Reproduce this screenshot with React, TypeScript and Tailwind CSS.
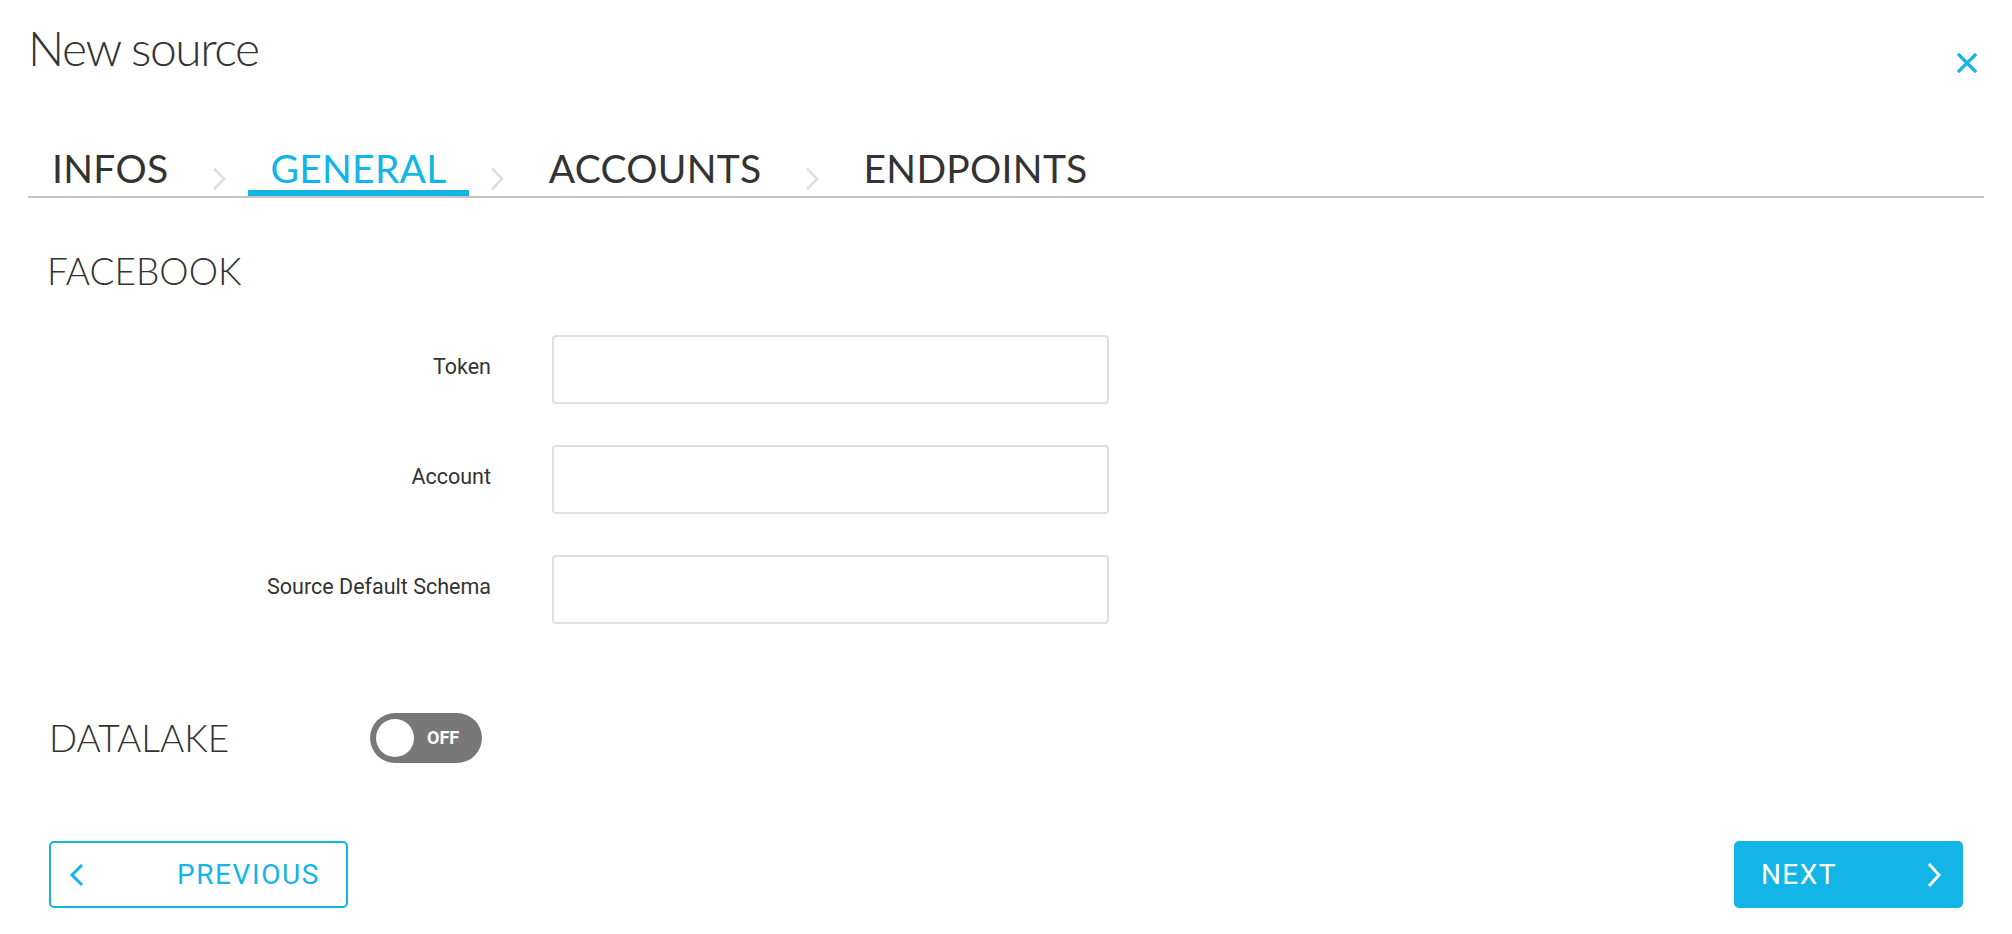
import React from "react";

const BLUE = "#12b5e6";

function TabChevron() {
  return (
    <div className="w-[58px] flex justify-center self-end mb-[6px]">
      <svg width="13" height="22" viewBox="0 0 13 22" fill="none">
        <path d="M2 1.5 L11 11 L2 20.5" stroke="#dcdcdc" strokeWidth="2.4" strokeLinecap="square" />
      </svg>
    </div>
  );
}

function Tab({ label, active }: { label: string; active?: boolean }) {
  return (
    <div
      className={
        "px-[22px] pt-[3px] border-b-[6px] text-[39px] leading-[43px] tracking-[0.3px] " +
        (active ? "border-[#12b5e6] text-[#12b5e6]" : "border-transparent text-[#333333]")
      }
      style={{ fontFamily: "Lato, 'Open Sans', sans-serif" }}
    >
      {label}
    </div>
  );
}

function Field({ label }: { label: string }) {
  return (
    <div className="flex items-start h-[69px]">
      <div
        className="w-[463px] text-right pt-[19px] text-[21.5px] leading-[25px] text-[#333333]"
        style={{ fontFamily: "Roboto, sans-serif" }}
      >
        {label}
      </div>
      <input
        type="text"
        className="ml-[61px] w-[557px] h-[69px] border-2 border-[#e0e0e0] rounded-[4px] bg-white outline-none"
      />
    </div>
  );
}

export default function App() {
  return (
    <div className="w-[2012px] h-[934px] bg-white px-[28px] pt-[19px] overflow-hidden">
      <div className="flex justify-between items-start h-[58px]">
        <h1
          className="text-[48px] leading-[58px] tracking-[-1.5px] text-[#333333] font-light"
          style={{ fontFamily: "Lato, sans-serif" }}
        >
          New source
        </h1>
        <button className="mt-[34px] mr-[7px]" aria-label="close">
          <svg width="20" height="20" viewBox="0 0 20 20" fill="none">
            <path d="M2 2 L18 18 M18 2 L2 18" stroke={BLUE} strokeWidth="3.2" strokeLinecap="square" />
          </svg>
        </button>
      </div>

      <div className="mt-[67px] flex items-end border-b-2 border-[#c4c4c4] pl-[2px]">
        <Tab label="INFOS" />
        <TabChevron />
        <Tab label="GENERAL" active />
        <TabChevron />
        <Tab label="ACCOUNTS" />
        <TabChevron />
        <Tab label="ENDPOINTS" />
      </div>

      <div
        className="mt-[51px] pl-[19px] text-[37px] leading-[44px] font-light text-[#333333]"
        style={{ fontFamily: "Lato, sans-serif" }}
      >
        FACEBOOK
      </div>

      <div className="mt-[42px] flex flex-col gap-[41px]">
        <Field label="Token" />
        <Field label="Account" />
        <Field label="Source Default Schema" />
      </div>

      <div className="mt-[89px] pl-[21px] flex items-center h-[50px]">
        <div
          className="w-[321px] text-[37px] leading-[42px] font-light text-[#333333]"
          style={{ fontFamily: "Lato, sans-serif" }}
        >
          DATALAKE
        </div>
        <div className="w-[112px] h-[50px] rounded-full bg-[#787878] flex items-center pl-[6px]">
          <div className="w-[38px] h-[38px] rounded-full bg-white" />
          <span
            className="ml-[13px] text-white font-bold text-[18px] leading-none"
            style={{ fontFamily: "Roboto, sans-serif" }}
          >
            OFF
          </span>
        </div>
      </div>

      <div className="mt-[78px] px-[21px] flex justify-between">
        <button
          className="w-[299px] h-[67px] border-2 border-[#12b5e6] rounded-[5px] flex items-center justify-between pl-[18px] pr-[26px] text-[#12b5e6]"
          style={{ fontFamily: "Roboto, sans-serif" }}
        >
          <svg width="16" height="24" viewBox="0 0 16 24" fill="none">
            <path d="M13 2 L3 12 L13 22" stroke={BLUE} strokeWidth="3" />
          </svg>
          <span className="text-[28px] leading-none tracking-[1.6px]">PREVIOUS</span>
        </button>
        <button
          className="w-[229px] h-[67px] bg-[#12b5e6] rounded-[5px] flex items-center justify-between pl-[27px] pr-[22px] text-white"
          style={{ fontFamily: "Roboto, sans-serif" }}
        >
          <span className="text-[28px] leading-none tracking-[1.4px]">NEXT</span>
          <svg width="14" height="26" viewBox="0 0 14 26" fill="none">
            <path d="M2 2 L12 13 L2 24" stroke="#ffffff" strokeWidth="3" />
          </svg>
        </button>
      </div>
    </div>
  );
}
